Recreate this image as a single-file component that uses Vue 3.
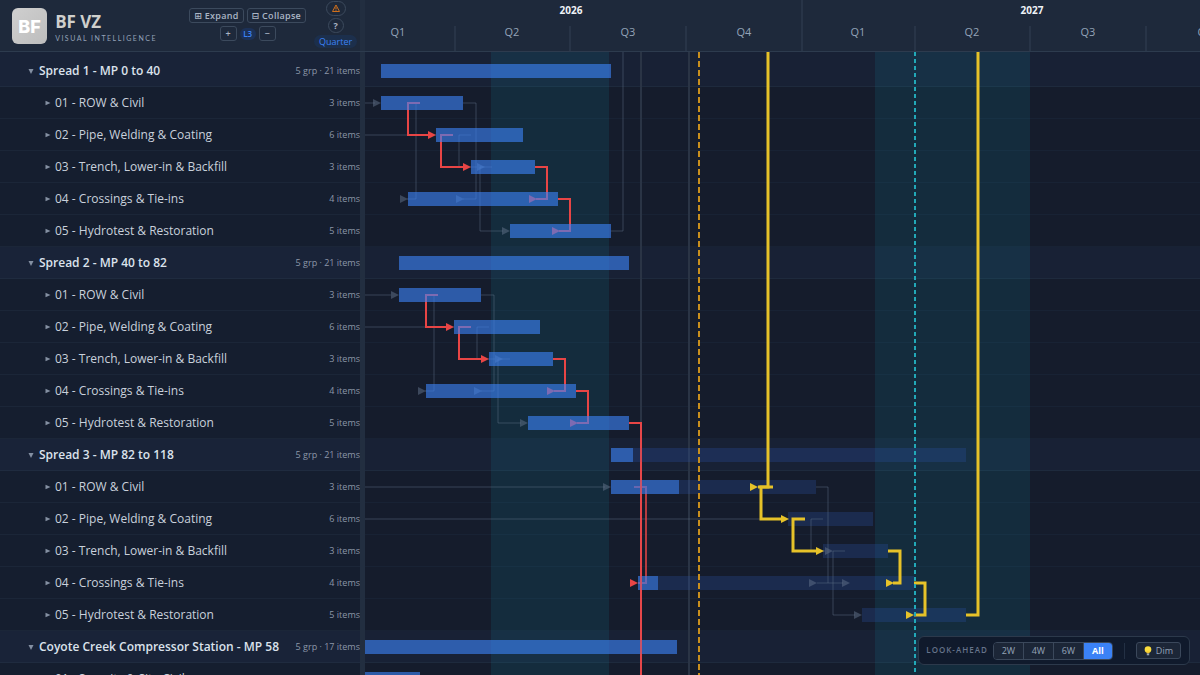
<script setup>
import { ref } from 'vue'

const scale = ref('All')
const ranges = ['2W', '4W', '6W', 'All']

const sub = (counts) => [
  ['01 - ROW & Civil', counts[0]],
  ['02 - Pipe, Welding & Coating', counts[1]],
  ['03 - Trench, Lower-in & Backfill', counts[2]],
  ['04 - Crossings & Tie-ins', counts[3]],
  ['05 - Hydrotest & Restoration', counts[4]],
].map(([name, n]) => ({ name, count: `${n} items` }))

const rows = [
  { group: true, name: 'Spread 1 - MP 0 to 40', count: '5 grp · 21 items' },
  ...sub([3, 6, 3, 4, 5]),
  { group: true, name: 'Spread 2 - MP 40 to 82', count: '5 grp · 21 items' },
  ...sub([3, 6, 3, 4, 5]),
  { group: true, name: 'Spread 3 - MP 82 to 118', count: '5 grp · 21 items' },
  ...sub([3, 6, 3, 4, 5]),
  { group: true, name: 'Coyote Creek Compressor Station - MP 58', count: '5 grp · 17 items' },
  { name: '01 - Security & Site Civil', count: '' },
]

const quarters = [
  { name: 'Q1', x: 33, end: 90 },
  { name: 'Q2', x: 147, end: 205 },
  { name: 'Q3', x: 263, end: 321 },
  { name: 'Q4', x: 379, end: 0 },
  { name: 'Q1', x: 493, end: 550 },
  { name: 'Q2', x: 607, end: 665 },
  { name: 'Q3', x: 723, end: 781 },
  { name: 'Q4', x: 840, end: 0 },
]

// row index, start, end
const bars = [
  [0, 16, 246], [1, 16, 98], [2, 71, 158], [3, 106, 170], [4, 43, 193], [5, 145, 246],
  [6, 34, 264], [7, 34, 116], [8, 89, 175], [9, 124, 188], [10, 61, 211], [11, 163, 264],
  [12, 246, 268], [13, 246, 314], [16, 273, 293],
  [18, -4, 312], [19, -4, 55],
]
const dimBars = [
  [12, 268, 601], [13, 314, 451], [14, 423, 508], [15, 458, 523], [16, 293, 549], [17, 497, 601],
]
const barY = (row) => 12 + row * 32

// y of a row's centre line: 19 + 32 * row
const spreadLinks = (dx, y) => ({
  grey: [
    `M${98 + dx} ${y}h13v96h-13`,
    `M${55 + dx} ${y}h-4v96h-9`,
    `M${106 + dx} ${y + 32}h-12v32h18`,
    `M${127 + dx} ${y + 64}h-12v64h23`,
  ],
  red: [
    `M${55 + dx} ${y}h-12v32h21`,
    `M${88 + dx} ${y + 32}h-12v32h24`,
    `M${170 + dx} ${y + 64}h12v32h-11`,
    `M${193 + dx} ${y + 96}h12v32h-11`,
  ],
  greyHeads: [[99 + dx, y + 96], [43 + dx, y + 96], [120 + dx, y + 64], [145 + dx, y + 128]],
  redHeads: [[71 + dx, y + 32], [106 + dx, y + 64], [172 + dx, y + 96], [195 + dx, y + 128]],
})
const s1 = spreadLinks(0, 51)
const s2 = spreadLinks(18, 243)

const greyLines = [
  ...s1.grey, ...s2.grey,
  'M0 51h10', 'M0 83h71', 'M246 179h12V0',
  'M0 243h26', 'M0 275h89', 'M0 435h240', 'M0 467h423',
]
const greyHeads = [...s1.greyHeads, ...s2.greyHeads, [16, 51], [34, 243], [246, 435]]
const redLines = [...s1.red, ...s2.red, 'M264 371h12v260']
const redHeads = [...s1.redHeads, ...s2.redHeads, [273, 531]]

const lateGrey = [
  'M451 435h12v96h-11', 'M463 531h15', 'M458 467h-12v32h14', 'M480 499h-12v64h22',
]
const lateGreyHeads = [[452, 531], [485, 531], [468, 499], [497, 563]]
const goldLines = [
  'M403 0v435h-10', 'M408 435h-12v32h21', 'M440 467h-12v32h24',
  'M523 499h12v32h-7', 'M549 531h11v32h-11', 'M601 563h12V0',
]
const goldHeads = [[393, 435], [424, 467], [459, 499], [529, 531], [549, 563]]
const head = ([x, y]) => `M${x} ${y}l-8 -4v8z`
</script>

<template>
  <div class="app">
    <header class="top">
      <div class="brand-pane">
        <div class="logo">BF</div>
        <div class="brand">
          <h1>BF VZ</h1>
          <p>VISUAL INTELLIGENCE</p>
        </div>
        <div class="levels">
          <div class="line">
            <button class="btn">⊞ Expand</button>
            <button class="btn">⊟ Collapse</button>
          </div>
          <div class="line">
            <button class="btn sq">+</button>
            <span class="level">L3</span>
            <button class="btn sq">−</button>
          </div>
        </div>
        <div class="tools">
          <button class="pill warn" aria-label="Warnings">
            <svg width="10" height="9" viewBox="0 0 10 9"><path d="M5 1L8.500 7.500H1.500Z" fill="none" stroke="#d0701c" stroke-linejoin="round" /><path d="M5 3.200v2.200M5 6v.8" stroke="#d0701c" /></svg>
          </button>
          <button class="pill">?</button>
          <button class="zoom">Quarter</button>
        </div>
      </div>
      <div class="split"></div>
      <div class="axis">
        <svg width="100%" height="51">
          <text class="year" x="206" y="14">2026</text>
          <text class="year" x="667" y="14">2027</text>
          <line class="tick" x1="437" x2="437" y1="0" y2="51" />
          <template v-for="q in quarters" :key="q.x">
            <text class="quarter" :x="q.x" y="36">{{ q.name }}</text>
            <line v-if="q.end" class="tick" :x1="q.end" :x2="q.end" y1="26" y2="51" />
          </template>
        </svg>
      </div>
    </header>

    <main class="body">
      <ul class="tree">
        <li v-for="(r, i) in rows" :key="i" :class="{ group: r.group }">
          <svg class="caret" width="6" height="6" viewBox="0 0 6 6">
            <path :d="r.group ? 'M.5 1h5L3 6z' : 'M.5 .8L5.500 3L.5 5.200z'" />
          </svg>
          <span class="name">{{ r.name }}</span>
          <span class="count">{{ r.count }}</span>
        </li>
      </ul>
      <div class="split"></div>
      <div class="chart">
        <svg width="100%" height="646">
          <template v-for="(r, i) in rows" :key="i">
            <rect v-if="r.group" x="0" :y="i ? 3 + i * 32 : 0" width="100%" :height="i ? 32 : 35" fill="#182135" />
            <line x1="0" x2="100%" :y1="34.5 + i * 32" :y2="34.5 + i * 32" :stroke="r.group ? '#1e2a3d' : '#182234'" />
          </template>
          <g class="bands">
            <rect x="126" y="0" width="118" height="100%" />
            <rect x="510" y="0" width="155" height="100%" />
          </g>
          <line x1="324" x2="324" y1="0" y2="100%" stroke="#2a3445" stroke-width="2" />
          <line x1="276" x2="276" y1="0" y2="435" stroke="#2a3445" stroke-width="2" />

          <g class="grey">
            <path v-for="(d, i) in greyLines" :key="i" :d="d" />
            <path v-for="(h, i) in greyHeads" :key="'h' + i" class="head" :d="head(h)" />
          </g>
          <g class="red">
            <path v-for="(d, i) in redLines" :key="i" :d="d" />
            <path class="soft" d="M269 435h12v96h-8" />
            <path v-for="(h, i) in redHeads" :key="'h' + i" class="head" :d="head(h)" />
          </g>
          <g class="bars">
            <rect v-for="(b, i) in bars" :key="i" :x="b[1]" :y="barY(b[0])" :width="b[2] - b[1]" height="14" />
          </g>
          <g class="dim">
            <rect v-for="(b, i) in dimBars" :key="i" :x="b[1]" :y="barY(b[0])" :width="b[2] - b[1]" height="14" />
          </g>
          <path class="spine" d="M276 372v280" />
          <g class="grey">
            <path v-for="(d, i) in lateGrey" :key="i" :d="d" />
            <path v-for="(h, i) in lateGreyHeads" :key="'h' + i" class="head" :d="head(h)" />
          </g>
          <g class="gold">
            <path v-for="(d, i) in goldLines" :key="i" :d="d" />
            <path v-for="(h, i) in goldHeads" :key="'h' + i" class="head" :d="head(h)" />
          </g>
          <line class="today" x1="334" x2="334" y1="0" y2="100%" />
          <line class="status" x1="550" x2="550" y1="0" y2="100%" />
        </svg>
      </div>
    </main>

    <div class="ahead">
      <span class="cap">LOOK-AHEAD</span>
      <div class="seg">
        <button v-for="r in ranges" :key="r" :class="{ on: scale === r }" @click="scale = r">{{ r }}</button>
      </div>
      <i class="rule"></i>
      <button class="dimmer">
        <svg width="8" height="10" viewBox="0 0 8 10"><circle cx="4" cy="3.500" r="3.300" fill="#fbdc3c" /><path d="M2.300 5.500h3.400L5.200 7.500H2.800z" fill="#f0c22e" /><path d="M2.800 7.500h2.400v1.800H2.800z" fill="#9aa7b5" /></svg>
        Dim
      </button>
    </div>
  </div>
</template>

<style>
body { background: #151c2c; overflow: hidden; }
</style>

<style scoped>
.app {
  height: 100vh;
  display: flex;
  flex-direction: column;
  overflow: hidden;
  background: #151c2c;
  color: #c9d1dc;
  font-family: "Open Sans", "Noto Sans", sans-serif;
}
button { font-family: inherit; margin: 0; cursor: pointer; }
svg { display: block; }
.top { display: flex; flex: none; background: #1e293b; border-bottom: 1px solid #2d3b4e; height: 51px; }
.brand-pane { width: 360px; flex: none; display: flex; box-sizing: border-box; padding-left: 12px; }
.split { width: 5px; flex: none; background: #222e40; }
.logo {
  width: 36px; height: 36px; margin-top: 8px; border-radius: 6px;
  background: linear-gradient(135deg, #cfcfcf, #bdbdbd);
  color: #fff; font: 800 18px/38px Inter, sans-serif; text-align: center;
}
.brand { margin: 12px 0 0 8px; width: 128px; }
h1 { margin: 0; font-size: 17px; line-height: 20px; font-weight: 700; color: #cfcfcc; }
.brand p { margin: 1px 0 0; font: 400 7px/10px Lato, sans-serif; letter-spacing: 1.5px; color: #94a3b8; white-space: nowrap; }
.levels { padding-top: 8px; width: 130px; margin-left: 4px; display: flex; flex-direction: column; gap: 3px; }
.line { display: flex; justify-content: center; align-items: center; gap: 3px; }
.btn {
  height: 15px; padding: 0 4px; border: 1px solid #3c4a5d; border-radius: 3px; background: #1e293b;
  color: #aab5c4; font: 600 9px/12px "Open Sans", "DejaVu Sans", sans-serif; letter-spacing: 0.3px; white-space: nowrap;
}
.sq { width: 17px; padding: 0; }
.level { width: 16px; text-align: center; font-size: 8px; line-height: 12px; font-weight: 600; color: #3b82f6; background: #1c3157; border-radius: 6px; }
.tools { margin-left: auto; width: 50px; display: flex; flex-direction: column; align-items: center; gap: 2px; padding-top: 1px; }
.pill { width: 16px; height: 15px; padding: 0; display: grid; place-items: center; border: 1px solid #3c4a5d; border-radius: 8px; background: #1e293b; color: #aab5c4; font-size: 9px; line-height: 12px; font-weight: 700; }
.pill.warn { width: 20px; }
.zoom { height: 13px; padding: 0 5px; border: 0; border-radius: 7px; background: #1c2f4c; color: #3b82f6; font-size: 8px; font-size: 9px; line-height: 13px; }
.axis { flex: 1; min-width: 0; overflow: hidden; }
.year { font-size: 10px; font-weight: 700; fill: #eef2f7; text-anchor: middle; }
.quarter { font-size: 11px; fill: #94a3b8; text-anchor: middle; }
.tick { stroke: #334155; }

.body { flex: 1; min-height: 0; display: flex; overflow: hidden; }
.tree { width: 360px; flex: none; margin: 0; padding: 0; list-style: none; background: #151e2f; }
.tree li {
  display: flex; align-items: center; height: 32px; box-sizing: border-box;
  padding-left: 45px; border-bottom: 1px solid #1b2638; font-size: 12px; line-height: 16px; white-space: nowrap;
}
.tree li.group { padding-left: 28px; background: #192338; font-weight: 600; color: #dbe2ec; border-color: #1f2b3f; }
.tree li:first-child { height: 35px; padding-top: 3px; }
.caret { flex: none; fill: #8490a2; margin-right: 4px; }
.group .caret { margin-right: 5px; }
.count { margin-left: auto; font-size: 9px; font-weight: 400; color: #8c97a8; }
.chart { flex: 1; min-width: 0; overflow: hidden; }
.bands rect { fill: #14b8d6; fill-opacity: 0.1; }
.grey path { fill: none; stroke: #64748b; stroke-opacity: 0.45; }
.grey .head { fill: #64748b; fill-opacity: 0.5; stroke: none; }
.red path { fill: none; stroke: #e84545; stroke-width: 2; }
.red .soft { stroke-opacity: 0.75; }
.red .head { fill: #e84545; stroke: none; }
.spine { stroke: #e5484d; stroke-width: 2; stroke-opacity: 0.7; }
.bars rect { fill: #3b82f6; fill-opacity: 0.62; }
.dim rect { fill: #2a52a8; fill-opacity: 0.28; }
.gold path { fill: none; stroke: #e6c229; stroke-width: 3; }
.gold .head { fill: #e6c229; stroke: none; }
.today { stroke: #c98f1d; stroke-width: 2; stroke-dasharray: 6 3; }
.status { stroke: #22a9b8; stroke-width: 2; stroke-dasharray: 4 3; }

.ahead {
  position: absolute; right: 10px; bottom: 10px; display: flex; align-items: center; box-sizing: border-box;
  height: 29px; padding: 0 8px 0 7px; border: 1px solid #2c394b; border-radius: 6px; background: #101a2c;
}
.cap { font-size: 8px; line-height: 12px; font-weight: 600; letter-spacing: 1px; color: #66738a; margin-right: 5px; padding-bottom: 2px; white-space: nowrap; }
.seg { display: flex; border: 1px solid #3b485b; border-radius: 4px; overflow: hidden; }
.seg button { width: 30px; height: 16px; padding: 0; border: 0; border-right: 1px solid #3b485b; background: #1c2637; color: #94a3b8; font-size: 9px; line-height: 16px; }
.seg button.on { width: 28px; background: #3b82f6; color: #fff; font-weight: 700; border-right: 0; }
.rule { width: 1px; height: 16px; background: #233044; margin: 0 11px; }
.dimmer { height: 17px; padding: 0 7px; display: flex; align-items: center; gap: 4px; border: 1px solid #3b485b; border-radius: 3px; background: #1c2637; color: #94a3b8; font-size: 9px; line-height: 12px; }
</style>
